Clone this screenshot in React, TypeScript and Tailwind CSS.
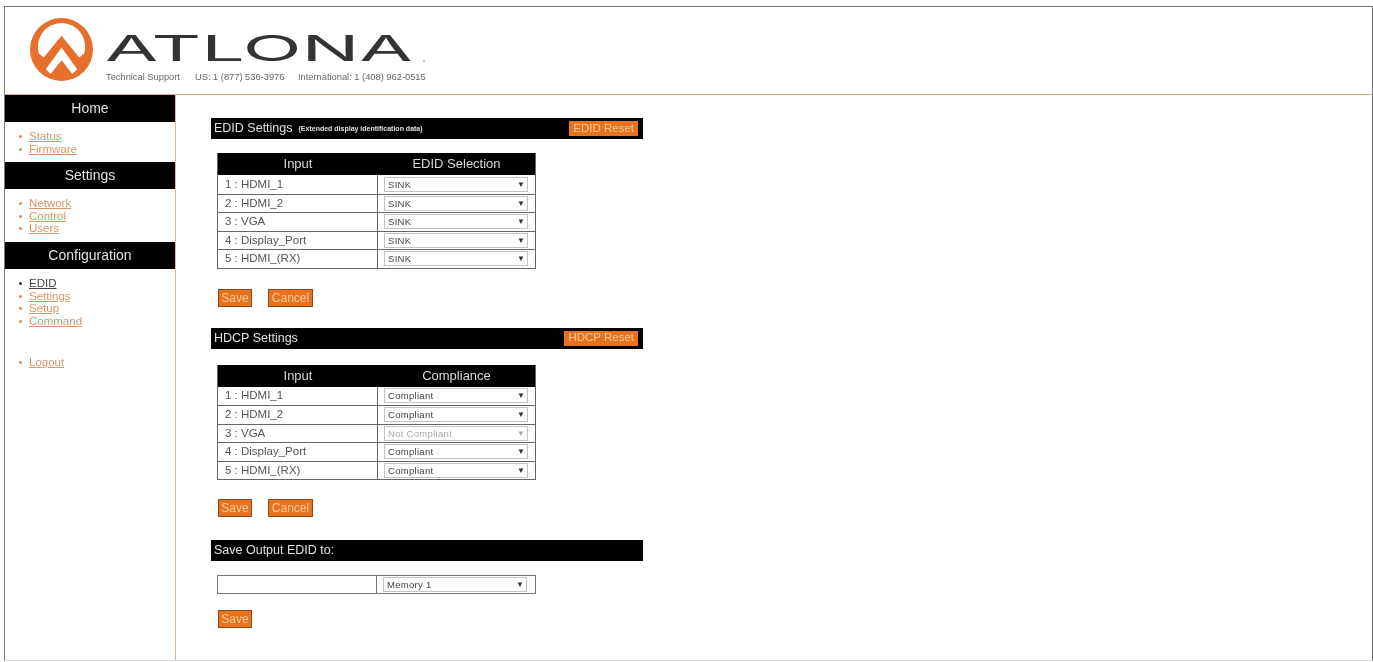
const navHome = ["Status", "Firmware"]
const navSettings = ["Network", "Control", "Users"]
const navConfig = ["EDID", "Settings", "Setup", "Command"]
const ports = ["1 : HDMI_1", "2 : HDMI_2", "3 : VGA", "4 : Display_Port", "5 : HDMI_(RX)"]

function Logo() {
  return (
    <svg width="63" height="63" viewBox="0 0 64 64" className="shrink-0">
      <circle cx="32" cy="32" r="32" fill="#e66f2b" />
      <path d="M9 36 A 24 24 0 1 1 55 36 L 50 40 L 32 18 L 14 40 Z" fill="#ffffff" />
      <path d="M16 52 L 32 30 L 48 52 L 43 57 L 32 43 L 21 57 Z" fill="#ffffff" />
    </svg>
  )
}

function NavList({ items, active, className }: { items: string[]; active?: string; className?: string }) {
  return (
    <ul className={"pl-[14px] text-[11.5px] leading-[12.7px] " + (className ?? "")}>
      {items.map((item) => (
        <li key={item} className="flex items-center gap-[7px]">
          <span className={"h-[3px] w-[3px] rounded-full " + (item === active ? "bg-[#333333]" : "bg-[#d98b58]")} />
          <a className={"underline " + (item === active ? "text-[#444444]" : "text-[#d9946a]")}>{item}</a>
        </li>
      ))}
    </ul>
  )
}

function NavHeading({ children }: { children: string }) {
  return (
    <div className="flex h-[27px] items-center justify-center bg-black text-[14px] text-[#e0e0e0]">{children}</div>
  )
}

function OrangeButton({ children, className }: { children: string; className?: string }) {
  return (
    <button className={"h-[18px] border border-[#8a4a1c] bg-[#e8731f] text-[12px] leading-none text-[#f6c9a0] " + (className ?? "")}>
      {children}
    </button>
  )
}

function SectionBar({ title, note, action }: { title: string; note?: string; action?: string }) {
  return (
    <div className="ml-[35px] flex h-[21px] w-[432px] items-center bg-black pl-[3px] pr-[5px] text-[#e0e0e0]">
      <span className="text-[12.5px]">{title}</span>
      {note && <span className="ml-[6px] mt-[2px] text-[7px] font-bold">{note}</span>}
      {action && (
        <span className="ml-auto flex h-[15px] items-center bg-[#e8731f] px-[4px] text-[11.5px] text-[#f7c79c]">{action}</span>
      )}
    </div>
  )
}

function Picker({ value, disabled }: { value: string; disabled?: boolean }) {
  return (
    <div className="relative h-[15px] w-[144px]">
      <select
        defaultValue={value}
        disabled={disabled}
        className={"block h-full w-full appearance-none border border-[#c4c4c4] bg-white pl-[3px] font-['Liberation_Sans'] text-[9.5px] tracking-[0.3px] " + (disabled ? "text-[#aaaaaa]" : "text-[#444444]")}
      >
        <option>{value}</option>
      </select>
      <span className={"absolute right-[3px] top-[3px] text-[8px] leading-[9px] " + (disabled ? "text-[#aaaaaa]" : "text-[#333333]")}>▼</span>
    </div>
  )
}

function PortTable({ heading, values }: { heading: string; values: { value: string; disabled?: boolean }[] }) {
  return (
    <div className="ml-[41px] w-[319px] border-b border-l border-r border-[#666666]">
      <div className="flex h-[22px] items-center bg-black text-[13px] text-[#d8d8d8]">
        <div className="w-[160px] text-center">Input</div>
        <div className="flex-1 text-center">{heading}</div>
      </div>
      {ports.map((port, i) => (
        <div key={port} className={"flex h-[18.5px] " + (i > 0 ? "border-t border-[#666666]" : "")}>
          <div className="flex w-[160px] items-center border-r border-[#666666] pl-[7px] text-[11.5px] text-[#555555]">{port}</div>
          <div className="flex flex-1 items-center pl-[6px]">
            <Picker value={values[i].value} disabled={values[i].disabled} />
          </div>
        </div>
      ))}
    </div>
  )
}

function Buttons() {
  return (
    <div className="ml-[42px] flex gap-[16px]">
      <OrangeButton className="w-[34px]">Save</OrangeButton>
      <OrangeButton className="w-[45px]">Cancel</OrangeButton>
    </div>
  )
}

export default function App() {
  return (
    <div className="h-[662px] overflow-hidden bg-white pl-[4px] pt-[6px] font-['Liberation_Sans',Arial,sans-serif]">
      <div className="flex h-[655px] w-[1369px] flex-col border border-b-[#dddddd] border-l-[#777777] border-r-[#777777] border-t-[#777777] blur-[0.5px]">
        {/* top banner */}
        <header className="flex h-[88px] shrink-0 items-start border-b border-[#e8a878] pl-[25px] pt-[11px]">
          <Logo />
          <div className="ml-[12px]">
            <div className="relative mt-[14px] flex h-[32px] w-[320px] items-end">
              <span className="inline-block origin-left scale-x-[2.2] font-['Inter'] text-[35px] font-normal leading-[32px] text-[#333333]">
                ATLONA
              </span>
              <span className="absolute bottom-[2px] right-0 h-[2px] w-[2px] rounded-full bg-[#aaaaaa]" />
            </div>
            <div className="mt-[7px] flex text-[9.3px] text-[#666666]">
              <span className="ml-[1px] w-[89px]">Technical Support</span>
              <span className="w-[103px]">US: 1 (877) 536-3976</span>
              <span>International: 1 (408) 962-0515</span>
            </div>
          </div>
        </header>

        <div className="flex flex-1">
          {/* left nav */}
          <aside className="w-[171px] shrink-0 border-r border-[#d9b89c]">
            <NavHeading>Home</NavHeading>
            <NavList items={navHome} className="h-[40px] pt-[8px]" />
            <NavHeading>Settings</NavHeading>
            <NavList items={navSettings} className="h-[53px] pt-[8px]" />
            <NavHeading>Configuration</NavHeading>
            <NavList items={navConfig} active="EDID" className="pt-[8px]" />
            <NavList items={["Logout"]} className="mt-[28px]" />
          </aside>

          {/* main column */}
          <main className="flex-1 pt-[23px]">
            <SectionBar title="EDID Settings" note="(Extended display identification data)" action="EDID Reset" />
            <div className="mt-[14px]">
              <PortTable heading="EDID Selection" values={ports.map(() => ({ value: "SINK" }))} />
            </div>
            <div className="mt-[20px]">
              <Buttons />
            </div>

            <div className="mt-[21px]">
              <SectionBar title="HDCP Settings" action="HDCP Reset" />
            </div>
            <div className="mt-[16px]">
              <PortTable
                heading="Compliance"
                values={[
                  { value: "Compliant" },
                  { value: "Compliant" },
                  { value: "Not Compliant", disabled: true },
                  { value: "Compliant" },
                  { value: "Compliant" },
                ]}
              />
            </div>
            <div className="mt-[19px]">
              <Buttons />
            </div>

            <div className="mt-[23px]">
              <SectionBar title="Save Output EDID to:" />
            </div>
            <div className="ml-[41px] mt-[14px] flex h-[19px] w-[319px] border border-[#777777]">
              <div className="w-[159px] border-r border-[#777777]" />
              <div className="flex flex-1 items-center pl-[6px]">
                <Picker value="Memory 1" />
              </div>
            </div>
            <div className="ml-[42px] mt-[12px]">
              <OrangeButton className="w-[34px]">Save</OrangeButton>
            </div>
          </main>
        </div>
      </div>
    </div>
  )
}
